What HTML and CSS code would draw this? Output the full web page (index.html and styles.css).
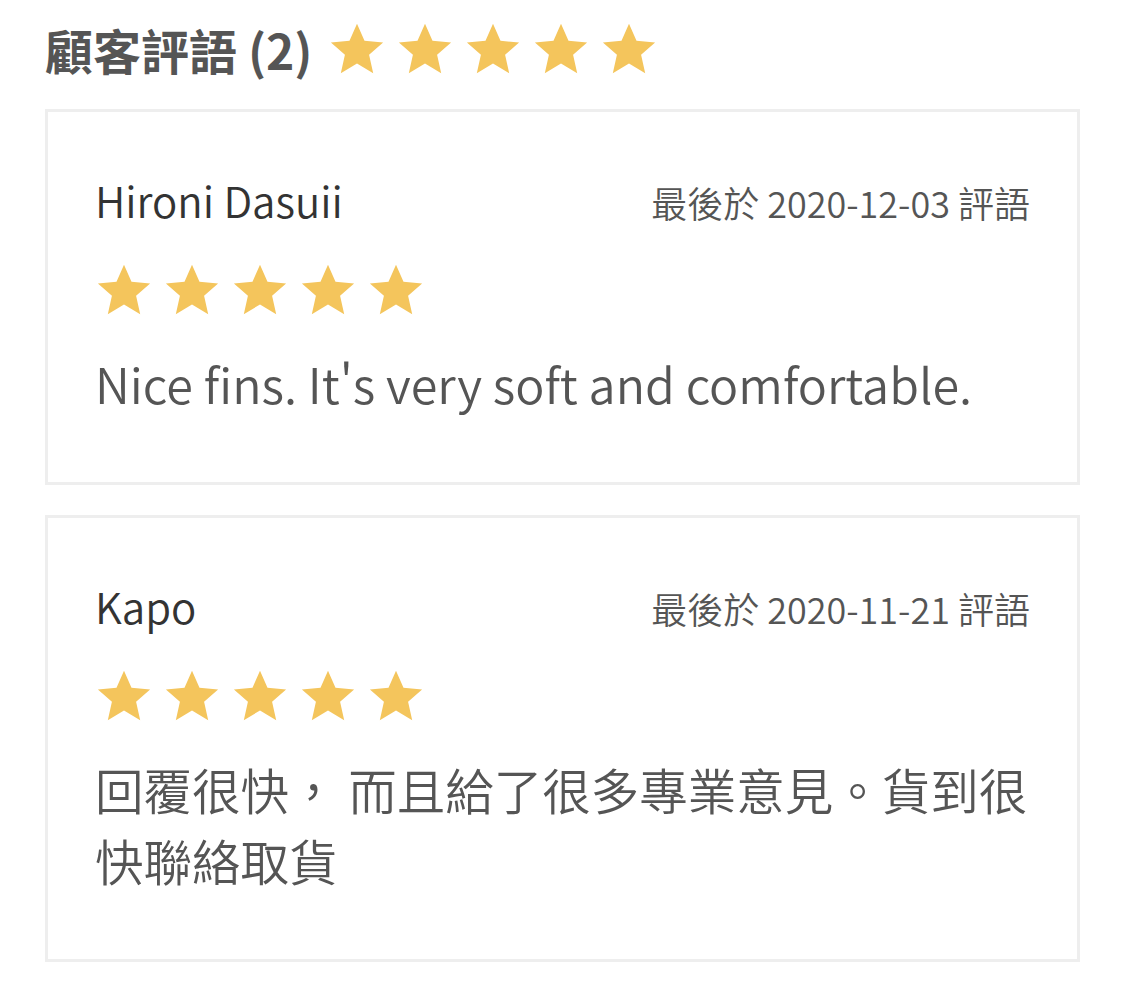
FILE: index.html
```html
<!DOCTYPE html>
<html lang="zh-Hant">
<head>
<meta charset="utf-8">
<link rel="stylesheet" href="styles.css">
</head>
<body>
<svg width="0" height="0" class="defs">
  <defs>
    <symbol id="star" viewBox="0 0 24 24">
      <path d="M12 1.5l3.1 7.1 7.7.7-5.8 5.1 1.7 7.6L12 18l-6.7 4 1.7-7.6-5.8-5.1 7.7-.7z"/>
    </symbol>
  </defs>
</svg>
<section class="reviews">
  <h2 class="title">
    <span>顧客評語 (2)</span>
    <span class="stars big">
      <svg><use href="#star"/></svg><svg><use href="#star"/></svg><svg><use href="#star"/></svg><svg><use href="#star"/></svg><svg><use href="#star"/></svg>
    </span>
  </h2>
  <article class="card">
    <div class="head">
      <span class="name">Hironi Dasuii</span>
      <span class="date">最後於 2020-12-03 評語</span>
    </div>
    <div class="stars">
      <svg><use href="#star"/></svg><svg><use href="#star"/></svg><svg><use href="#star"/></svg><svg><use href="#star"/></svg><svg><use href="#star"/></svg>
    </div>
    <p class="text">Nice fins. It's very soft and comfortable.</p>
  </article>
  <article class="card">
    <div class="head">
      <span class="name">Kapo</span>
      <span class="date">最後於 2020-11-21 評語</span>
    </div>
    <div class="stars">
      <svg><use href="#star"/></svg><svg><use href="#star"/></svg><svg><use href="#star"/></svg><svg><use href="#star"/></svg><svg><use href="#star"/></svg>
    </div>
    <p class="text">回覆很快， 而且給了很多專業意見。貨到很快聯絡取貨</p>
  </article>
</section>
</body>
</html>
```
FILE: styles.css
```css
html, body {
  margin: 0;
  padding: 0;
  background: #fff;
}
body {
  font-family: "Noto Sans CJK TC", "Noto Sans", sans-serif;
  color: #555;
}
.defs {
  position: absolute;
}
.reviews {
  padding: 17px 45px 0 45px;
  width: 1035px;
}
.title {
  display: flex;
  align-items: center;
  gap: 15px;
  margin: 0 0 28px 0;
  font-size: 48px;
  font-weight: 700;
  line-height: 64px;
  color: #555;
}
.stars {
  display: flex;
  gap: 10px;
  fill: #f4c55c;
}
.stars svg {
  width: 58px;
  height: 58px;
}
.card {
  border: 3px solid #eeeeee;
  padding: 60px 47px 63px 47px;
  margin-bottom: 30px;
}
.head {
  display: flex;
  justify-content: space-between;
  align-items: baseline;
}
.name {
  font-size: 42px;
  color: #333;
  line-height: 56px;
  font-weight: 350;
}
.date {
  font-size: 36px;
  color: #555;
  font-weight: 350;
}
.card .stars {
  margin-top: 33px;
}
.text {
  margin: 29px 0 0 0;
  font-size: 48.5px;
  line-height: 71px;
  color: #555;
  font-weight: 350;
}
```
